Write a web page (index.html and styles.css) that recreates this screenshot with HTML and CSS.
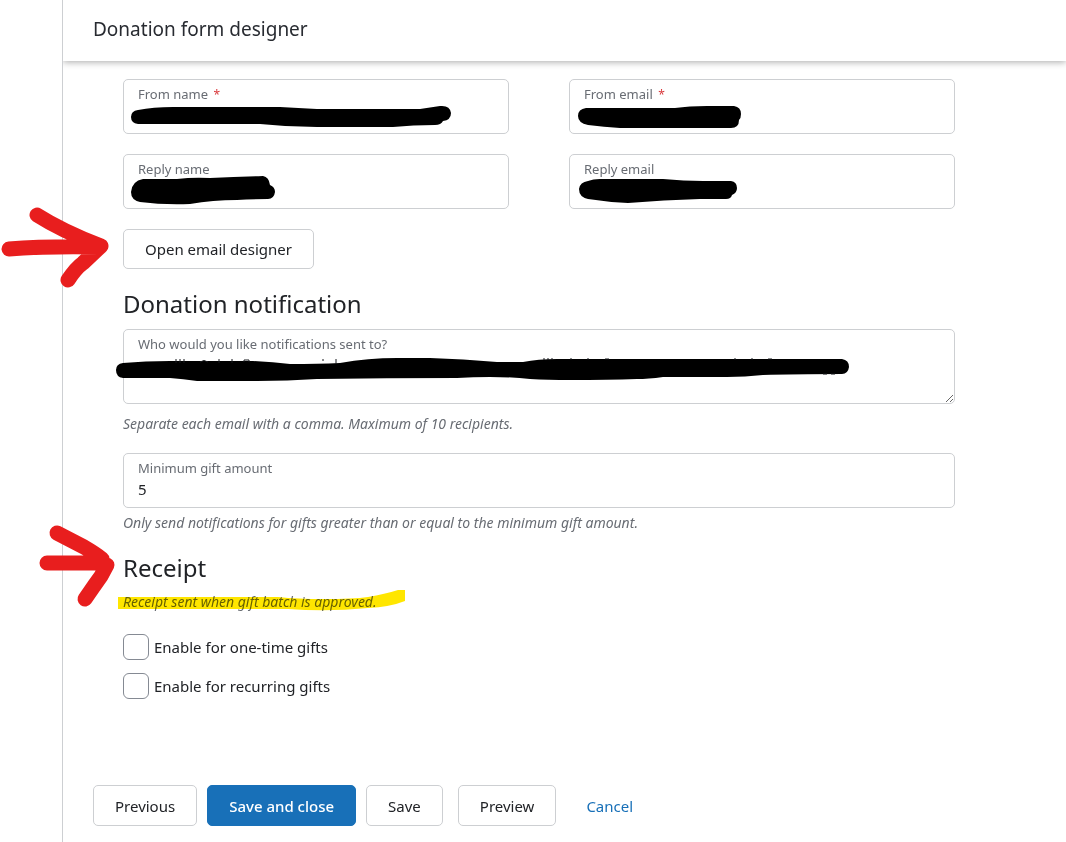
FILE: index.html
```html
<!DOCTYPE html>
<html lang="en">
<head>
    <meta charset="UTF-8">
    <meta name="viewport" content="width=device-width, initial-scale=1.0">
    <title>Donation form designer</title>
    <link rel="stylesheet" href="styles.css">
</head>
<body>
    <div class="page">
        <header class="page-header">
            <h1>Donation form designer</h1>
        </header>

        <form class="designer">
            <div class="content">
                <div class="field-grid">
                    <div class="field">
                        <label for="fromName">From name <span class="required">*</span></label>
                        <input type="text" id="fromName" required>
                        <svg class="mark" width="386" height="55" aria-hidden="true">
                            <path d="M8 38Q8 32 15 31Q30 28 50 28H157Q175 29 194 30H297L317 27Q327 26 328 34Q328 41 320 42Q318 46 312 46Q290 46 270 48H194Q165 48 137 45H15Q8 44 8 38Z"/>
                        </svg>
                    </div>
                    <div class="field">
                        <label for="fromEmail">From email <span class="required">*</span></label>
                        <input type="email" id="fromEmail" required>
                        <svg class="mark" width="386" height="55" aria-hidden="true">
                            <path d="M9 37Q9 30 17 29H106Q120 27 138 27H165Q172 28 172 35Q172 39 170 41Q170 49 162 49H51Q35 48 19 46Q9 44 9 37Z"/>
                        </svg>
                    </div>
                    <div class="field">
                        <label for="replyName">Reply name</label>
                        <input type="text" id="replyName">
                        <svg class="mark" width="386" height="55" aria-hidden="true">
                            <path d="M8 38Q9 27 20 25Q38 25 54 25Q70 23 87 24Q115 23 140 22Q146 23 147 31Q152 33 152 38Q151 45 145 45Q128 45 114 46Q90 46 67 50Q40 51 17 48Q8 46 8 38Z"/>
                        </svg>
                    </div>
                    <div class="field">
                        <label for="replyEmail">Reply email</label>
                        <input type="email" id="replyEmail">
                        <svg class="mark" width="386" height="55" aria-hidden="true">
                            <path d="M10 35Q11 28 19 27Q24 25 31 25H94Q115 27 134 27H162Q168 28 168 34Q168 39 163 41Q162 45 157 45H131Q95 46 59 49Q38 48 19 45Q10 43 10 35Z"/>
                        </svg>
                    </div>
                </div>

                <div class="action">
                    <button type="button" class="btn">Open email designer</button>
                    <svg class="arrow" width="120" height="90" aria-hidden="true">
                        <path d="M9 39Q45 36 100 37M37 5Q62 21 101 36M68 70Q76 58 83 53L101 36"/>
                    </svg>
                </div>

                <h2>Donation notification</h2>
                <div class="field field-area">
                    <label for="recipients">Who would you like notifications sent to?</label>
                    <textarea id="recipients"></textarea>
                    <svg class="mark" width="832" height="75" aria-hidden="true">
                        <path d="M-7 41Q-7 35 0 34Q22 32 47 32H130Q150 33 167 35Q195 35 217 34Q245 29 274 29H307Q340 30 374 33H400Q415 30 434 30H719Q726 31 726 38Q725 45 719 45Q670 45 640 46Q622 48 604 48H540Q525 50 514 50Q485 51 447 51Q425 51 407 50Q390 48 367 48Q350 48 334 49Q264 49 194 50Q165 52 134 52H74Q60 50 47 49H0Q-7 48 -7 41Z"/>
                        <path class="ticks" d="M53 30v4M57 30v4M61 30v4M77 33Q81 30 85 33M96 30v4M109 30v4M121 33v-2h5v2M200 30v2M213 30v5M421 29v2M425 29v2M429 29v2M448 29v2M465 29v2M482 30h4M612 29v2M629 29v2M645 30h4M700 45h4M708 45h4"/>
                    </svg>
                </div>
                <p class="help">Separate each email with a comma. Maximum of 10 recipients.</p>

                <div class="field">
                    <label for="minimum">Minimum gift amount</label>
                    <input type="text" id="minimum" inputmode="numeric" value="5">
                </div>
                <p class="help help-close">Only send notifications for gifts greater than or equal to the minimum gift amount.</p>

                <div class="action">
                    <h2>Receipt</h2>
                    <svg class="arrow arrow-receipt" width="120" height="90" aria-hidden="true">
                        <path d="M47 38H104M57 8L84 22Q96 29 102 34M85 74L94 61Q102 51 107 40"/>
                    </svg>
                </div>
                <p class="help help-receipt">
                    Receipt sent when gift batch is approved.
                    <svg class="highlight" width="287" height="20" aria-hidden="true">
                        <path d="M0 7H160Q180 9 205 9Q235 9 250 7Q267 4 280 0H287V11Q272 17 250 18Q210 22 170 19H0Z"/>
                    </svg>
                </p>

                <label class="check"><input type="checkbox"> Enable for one-time gifts</label>
                <label class="check"><input type="checkbox"> Enable for recurring gifts</label>
            </div>

            <footer class="buttons">
                <button type="button" class="btn">Previous</button>
                <button type="submit" class="btn btn-primary">Save and close</button>
                <button type="button" class="btn">Save</button>
                <button type="button" class="btn btn-preview">Preview</button>
                <a href="#" class="cancel">Cancel</a>
            </footer>
        </form>
    </div>
</body>
</html>
```

FILE: styles.css
```css
* {
    box-sizing: border-box;
    margin: 0;
    padding: 0;
}

body {
    background-color: white;
    color: #212327;
    font-family: "Noto Sans", "Open Sans", sans-serif;
    font-size: 15px;
    line-height: 20px;
}

.page {
    min-height: 100vh;
    margin-left: 62px;
    border-left: 1px solid #cdcfd2;
}

.page-header {
    padding: 15px 30px 18px;
    box-shadow: 0 1px 7px rgba(0, 0, 0, 0.35);
    clip-path: inset(0 0 -12px 0);
}

h1 {
    color: #282b31;
    font-size: 19px;
    font-weight: normal;
    line-height: 28px;
}

h2 {
    font-size: 24px;
    font-weight: normal;
    line-height: 30px;
}

.content {
    padding: 18px 111px 0 60px;
}

.field-grid {
    display: grid;
    grid-template-columns: 1fr 1fr;
    gap: 20px 60px;
}

.field {
    position: relative;
    display: flex;
    flex-direction: column;
    height: 55px;
    border: 1px solid #cdcfd2;
    border-radius: 5px;
}

.field label {
    padding: 5px 14px 0;
    color: #686c73;
    font-size: 13px;
    line-height: 18px;
}

.required {
    margin-left: 2px;
    color: #d93a3d;
    font-size: 12px;
}

.field input,
.field textarea {
    flex: 1;
    width: 100%;
    padding: 0 14px;
    border: none;
    border-radius: 5px;
    outline: none;
    background: transparent;
    color: inherit;
    font: inherit;
}

.field input {
    padding-bottom: 6px;
}

.field-area {
    height: 75px;
    margin-top: 10px;
}

.field-area textarea {
    resize: vertical;
}

.field:focus-within {
    border-color: #1870b8;
}

.action {
    position: relative;
    margin-top: 20px;
}

.action + h2 {
    margin-top: 20px;
}

.help {
    margin: 10px 0 19px;
    color: #686c73;
    font-size: 14px;
    font-style: italic;
}

.help-close {
    margin: 5px 0 0;
}

.help-receipt {
    position: relative;
    margin: 9px 0 22px;
}

.check {
    display: flex;
    align-items: center;
    gap: 5px;
    width: fit-content;
    margin-bottom: 13px;
}

.check input {
    appearance: none;
    width: 26px;
    height: 26px;
    border: 1px solid #858a93;
    border-radius: 6px;
}

.check input:checked {
    background-color: #1870b8;
}

.btn {
    height: 40px;
    padding: 0 21px;
    border: 1px solid #cdcfd2;
    border-radius: 5px;
    background-color: white;
    color: inherit;
    font: inherit;
    cursor: pointer;
}

.btn-primary {
    border-color: #1870b8;
    background-color: #1870b8;
    color: white;
    font-weight: 500;
}

.btn-preview {
    margin-left: 5px;
}

.buttons {
    display: flex;
    flex-wrap: wrap;
    align-items: center;
    gap: 10px;
    padding: 73px 30px 16px;
}

.buttons .btn {
    height: 41px;
}

.cancel {
    margin-left: 20px;
    color: #1870b8;
    text-decoration: none;
}

/* pen marks drawn over the form */
.mark,
.arrow,
.highlight {
    position: absolute;
    overflow: visible;
    pointer-events: none;
}

.mark {
    top: -1px;
    left: -1px;
}

.ticks {
    fill: none;
    stroke: #17191c;
}

.arrow {
    top: -19px;
    left: -123px;
    fill: none;
    stroke: #e81e1e;
    stroke-width: 15px;
    stroke-linecap: round;
    stroke-linejoin: round;
}

.arrow-receipt {
    top: -28px;
}

.highlight {
    top: -2px;
    left: -5px;
    fill: #ffe600;
    mix-blend-mode: multiply;
}
```
